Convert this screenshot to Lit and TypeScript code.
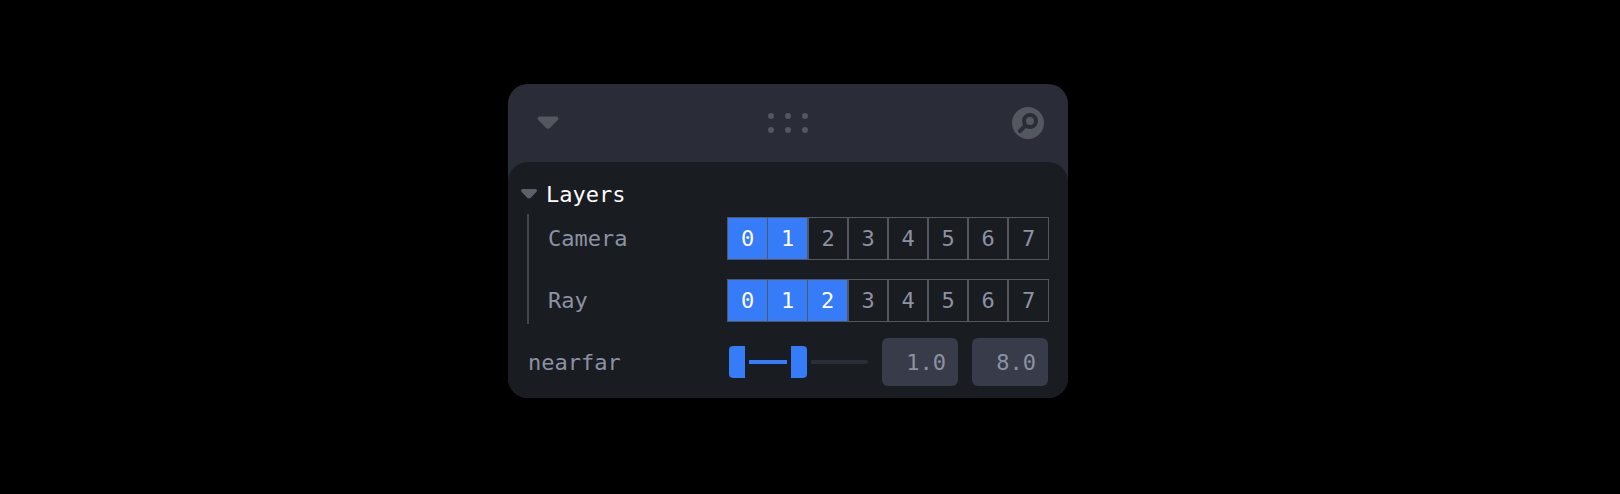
import { LitElement, html, css } from "lit";
import { customElement, state } from "lit/decorators.js";
import { classMap } from "lit/directives/class-map.js";

interface LayerRow {
  label: string;
  mask: boolean[];
}

const maskOf = (count: number) => Array.from({ length: 8 }, (_, i) => i < count);

@customElement("app-root")
export class AppRoot extends LitElement {
  static styles = css`
    :host {
      display: flex;
      justify-content: center;
      box-sizing: border-box;
      min-height: 100vh;
      padding: 84px 44px 0 0;
      background: #000;
      color: #8c92a4;
      font: 22px/26px Menlo, "DejaVu Sans Mono", monospace;
    }
    * {
      box-sizing: border-box;
    }
    button,
    input {
      margin: 0;
      padding: 0;
      border: 0;
      background: none;
      color: inherit;
      font: inherit;
    }
    button {
      cursor: pointer;
    }
    svg {
      display: block;
    }
    .panel {
      align-self: flex-start;
      width: 560px;
      max-width: 100%;
      border-radius: 20px;
      background: #2a2c37;
      overflow: hidden;
    }
    .header {
      display: flex;
      align-items: center;
      justify-content: space-between;
      height: 78px;
      padding: 0 24px;
      color: #535760;
    }
    .body {
      padding: 12px 19px;
      border-radius: 20px;
      background: #191c20;
    }
    .title {
      display: flex;
      align-items: center;
      gap: 9px;
      height: 40px;
      margin-left: -6px;
      color: #fefefe;
    }
    .label {
      padding-top: 2px;
    }
    .title svg {
      color: #5c606b;
    }
    .folder {
      display: grid;
      gap: 14px;
      padding-left: 19px;
      margin-bottom: 14px;
      border-left: 2px solid #43464d;
    }
    .row {
      display: flex;
      align-items: center;
      justify-content: space-between;
      height: 48px;
    }
    .range-row {
      padding: 0 1px;
    }
    .bits {
      display: grid;
      grid-template-columns: repeat(8, 1fr);
      width: 322px;
      height: 43px;
      margin-top: 1px;
      border: 1px solid #535760;
    }
    .bit {
      border: 0 solid #535760;
      border-right-width: 1px;
      border-left-width: 1px;
    }
    .bit:first-child,
    .bit.on {
      border-left-width: 0;
    }
    .bit:last-child {
      border-right-width: 0;
    }
    .bit.on {
      background: #367bf7;
      color: #fefefe;
    }
    .interval {
      display: flex;
      align-items: center;
      gap: 14px;
      width: 323px;
    }
    .slider {
      display: grid;
      flex: 1;
      align-items: center;
    }
    .track,
    .slider input {
      grid-area: 1 / 1;
      min-width: 0;
      width: 100%;
    }
    .track {
      height: 4px;
      border-radius: 2px;
      background: #2a2c37;
    }
    .fill {
      height: 4px;
      background: #367bf7;
    }
    .slider input {
      height: 32px;
      appearance: none;
      pointer-events: none;
    }
    .slider input::-webkit-slider-thumb {
      appearance: none;
      width: 24px;
      height: 32px;
      border: solid #191c20;
      border-width: 0 4px;
      background: #367bf7;
      pointer-events: auto;
    }
    .slider .near::-webkit-slider-thumb {
      border-radius: 8px 0 0 8px / 4px 0 0 4px;
    }
    .slider .far::-webkit-slider-thumb {
      border-radius: 0 8px 8px 0 / 0 4px 4px 0;
    }
    .number {
      width: 76px;
      height: 48px;
      padding: 0 12px;
      border-radius: 6px;
      background: #383b4a;
      text-align: right;
    }
  `;

  @state() private open = true;
  @state() private near = 1;
  @state() private far = 8;
  @state() private rows: LayerRow[] = [
    { label: "Camera", mask: maskOf(2) },
    { label: "Ray", mask: maskOf(3) },
  ];

  private readonly min = 1;
  private readonly max = 14.4;

  private toggle(row: LayerRow, bit: number) {
    this.rows = this.rows.map((r) =>
      r === row ? { ...r, mask: r.mask.map((v, i) => (i === bit ? !v : v)) } : r
    );
  }

  private setNear(e: Event) {
    this.near = Math.min(Number((e.target as HTMLInputElement).value), this.far);
  }

  private setFar(e: Event) {
    this.far = Math.max(Number((e.target as HTMLInputElement).value), this.near);
  }

  private fraction(value: number) {
    return (value - this.min) / (this.max - this.min);
  }

  private renderRow(row: LayerRow) {
    return html`
      <div class="row" role="group" aria-label=${row.label}>
        <span class="label">${row.label}</span>
        <div class="bits">
          ${row.mask.map(
            (on, i) => html`<button
              class=${classMap({ bit: true, on })}
              aria-pressed=${on ? "true" : "false"}
              @click=${() => this.toggle(row, i)}
            >${i}</button>`
          )}
        </div>
      </div>
    `;
  }

  render() {
    const from = this.fraction(this.near);
    const to = this.fraction(this.far);
    const edge = (f: number) => `calc(12px + (100% - 24px) * ${f})`;
    return html`
      <section class="panel">
        <header class="header">
          <button aria-label="Collapse panel">
            <svg width="32" height="20" viewBox="0 0 32 20" fill="currentColor">
              <path d="M7.5 3.500h17c1.800 0 2.400 2.200 1.200 3.500l-7.600 7.800c-1.200 1.200-3 1.200-4.200 0L6.300 7C5.100 5.700 5.700 3.500 7.500 3.500z" />
            </svg>
          </button>
          <svg width="40" height="20" viewBox="0 0 40 20" fill="currentColor" aria-hidden="true">
            ${[3, 20, 37].map(
              (x) => html`<svg><circle cx=${x} cy="3" r="3" /><circle cx=${x} cy="17" r="3" /></svg>`
            )}
          </svg>
          <button aria-label="Search">
            <svg width="32" height="32" viewBox="0 0 32 32">
              <circle cx="16" cy="16" r="16" fill="currentColor" />
              <circle cx="18" cy="14" r="6" fill="none" stroke="#2a2c37" stroke-width="4" />
              <path d="M13.500 18.500L8 24" stroke="#2a2c37" stroke-width="4" stroke-linecap="round" />
            </svg>
          </button>
        </header>
        <div class="body">
          <button class="title" aria-expanded=${this.open ? "true" : "false"} @click=${() => (this.open = !this.open)}>
            <svg width="16" height="10" viewBox="0 0 16 10" fill="currentColor">
              <path d="M1.500 0h13c1.400 0 2 1.700 1 2.700L9.800 8.800c-1 .9-2.600.9-3.600 0L.5 2.700C-.5 1.700.100 0 1.500 0z" />
            </svg>
            <span class="label">Layers</span>
          </button>
          ${this.open ? html`<div class="folder">${this.rows.map((r) => this.renderRow(r))}</div>` : null}
          <div class="row range-row" role="group" aria-label="nearfar">
            <span class="label">nearfar</span>
            <div class="interval">
              <div class="slider">
                <div class="track">
                  <div class="fill" style="margin-left:${edge(from)};width:calc((100% - 24px) * ${to - from})"></div>
                </div>
                <input class="near" type="range" aria-label="Near" min=${this.min} max=${this.max} step="0.1" .value=${String(this.near)} @input=${this.setNear} />
                <input class="far" type="range" aria-label="Far" min=${this.min} max=${this.max} step="0.1" .value=${String(this.far)} @input=${this.setFar} />
              </div>
              <input class="number" aria-label="Near value" .value=${this.near.toFixed(1)} @change=${this.setNear} />
              <input class="number" aria-label="Far value" .value=${this.far.toFixed(1)} @change=${this.setFar} />
            </div>
          </div>
        </div>
      </section>
    `;
  }
}
